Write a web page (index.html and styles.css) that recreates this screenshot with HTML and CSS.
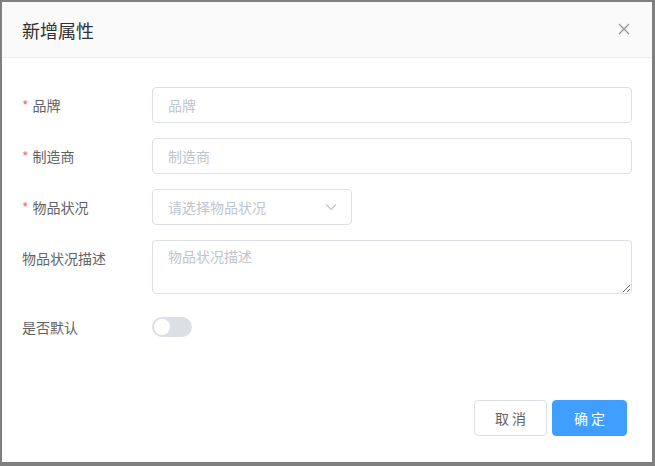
FILE: index.html
```html
<!DOCTYPE html>
<html lang="zh">
<head>
<meta charset="utf-8">
<link rel="stylesheet" href="styles.css">
</head>
<body>
<div class="dialog">
  <div class="dialog-header">
    <span class="dialog-title">新增属性</span>
    <button class="close-btn" aria-label="close">
      <svg width="12" height="12" viewBox="0 0 12 12"><path d="M1 1L11 11M11 1L1 11" stroke="#909399" stroke-width="1.2" fill="none"/></svg>
    </button>
  </div>
  <div class="dialog-body">
    <div class="form-item">
      <label class="form-label required">品牌</label>
      <div class="form-content"><input class="input" placeholder="品牌"></div>
    </div>
    <div class="form-item">
      <label class="form-label required">制造商</label>
      <div class="form-content"><input class="input" placeholder="制造商"></div>
    </div>
    <div class="form-item">
      <label class="form-label required">物品状况</label>
      <div class="form-content">
        <div class="select">
          <span class="select-placeholder">请选择物品状况</span>
          <svg class="select-arrow" width="12" height="8" viewBox="0 0 12 8"><path d="M1 1.5L6 6.5L11 1.5" stroke="#c0c4cc" stroke-width="1.2" fill="none"/></svg>
        </div>
      </div>
    </div>
    <div class="form-item">
      <label class="form-label">物品状况描述</label>
      <div class="form-content"><textarea class="textarea" placeholder="物品状况描述"></textarea></div>
    </div>
    <div class="form-item">
      <label class="form-label">是否默认</label>
      <div class="form-content"><span class="switch"><span class="switch-knob"></span></span></div>
    </div>
  </div>
  <div class="dialog-footer">
    <button class="btn btn-default">取 消</button>
    <button class="btn btn-primary">确 定</button>
  </div>
</div>
</body>
</html>
```
FILE: styles.css
```css
* { box-sizing: border-box; }
html, body { margin: 0; padding: 0; }
body {
  background: #7f7f7f;
  width: 655px;
  height: 466px;
  padding: 2px 3px 4px 2px;
  font-family: "Noto Sans CJK SC", "Noto Sans", sans-serif;
  overflow: hidden;
}
.dialog {
  width: 650px;
  height: 460px;
  background: #fff;
  display: flex;
  flex-direction: column;
}
.dialog-header {
  height: 56px;
  background: #fafafa;
  border-bottom: 1px solid #ebeef5;
  display: flex;
  align-items: center;
  justify-content: space-between;
  padding: 0 22px 0 20px;
}
.dialog-title {
  font-size: 18px;
  color: #303133;
  line-height: 24px;
  margin-top: 1px;
}
.close-btn {
  border: 0;
  background: none;
  padding: 0;
  width: 12px;
  height: 12px;
  display: flex;
  margin-top: -2px;
}
.dialog-body {
  padding: 29px 20px 0 20px;
  display: flex;
  flex-direction: column;
  gap: 15px;
  flex: 1;
}
.form-item {
  display: flex;
  align-items: flex-start;
}
.form-label {
  width: 130px;
  flex: none;
  font-size: 14px;
  color: #606266;
  line-height: 36px;
  height: 36px;
}
.form-label.required::before {
  content: "*";
  color: #f56c6c;
  margin-right: 4px;
}
.form-content {
  flex: 1;
  min-height: 36px;
  display: flex;
  align-items: center;
}
.input {
  width: 100%;
  height: 36px;
  border: 1px solid #dcdfe6;
  border-radius: 4px;
  padding: 0 15px;
  font-size: 14px;
  font-family: inherit;
  color: #606266;
  outline: none;
}
.input::placeholder, .textarea::placeholder { color: #c0c4cc; }
.select {
  width: 200px;
  height: 36px;
  border: 1px solid #dcdfe6;
  border-radius: 4px;
  padding: 0 14px 0 15px;
  display: flex;
  align-items: center;
  justify-content: space-between;
}
.select-placeholder {
  font-size: 14px;
  color: #c0c4cc;
}
.textarea {
  width: 100%;
  height: 54px;
  border: 1px solid #dcdfe6;
  border-radius: 4px;
  padding: 5px 15px;
  font-size: 14px;
  line-height: 1.5;
  font-family: inherit;
  color: #606266;
  outline: none;
  display: block;
}
.switch {
  width: 40px;
  height: 20px;
  border-radius: 10px;
  background: #dcdfe6;
  position: relative;
  display: block;
}
.switch-knob {
  position: absolute;
  top: 2px;
  left: 2px;
  width: 16px;
  height: 16px;
  border-radius: 50%;
  background: #fff;
}
.dialog-footer {
  display: flex;
  justify-content: flex-end;
  gap: 5px;
  padding: 0 25px 26px 0;
}
.btn {
  height: 36px;
  border-radius: 4px;
  font-size: 14px;
  font-family: inherit;
  padding: 0;
  cursor: pointer;
}
.btn-default {
  width: 73px;
  background: #fff;
  border: 1px solid #dcdfe6;
  color: #606266;
}
.btn-primary {
  width: 75px;
  background: #409eff;
  border: 1px solid #409eff;
  color: #fff;
}
```
